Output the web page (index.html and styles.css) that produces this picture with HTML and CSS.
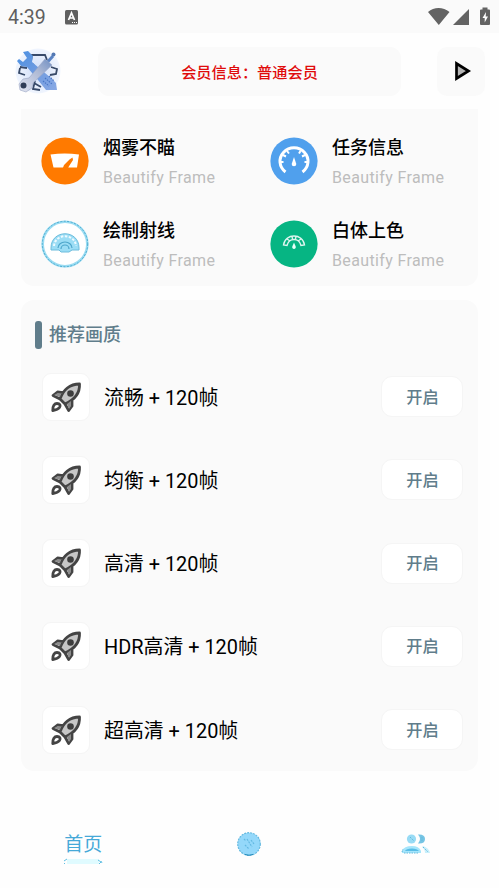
FILE: index.html
```html
<!DOCTYPE html>
<html lang="zh-CN">
<head>
<meta charset="utf-8">
<title>首页</title>
<link rel="stylesheet" href="styles.css">
</head>
<body>
<svg class="defs" aria-hidden="true">
  <symbol id="rocket" viewBox="0 0 32 32">
    <path d="M10 18C13 9 20 3 29.500 3C30 12 24 19 15 23Z" fill="#c6c6c6"/>
    <path d="M10 18L3 14.500L7.500 11L13.200 11.600M15 23L18.700 29.500L22 25V18.500M10 18C13 9 20 3 29.500 3C30 12 24 19 15 23ZM2.800 29.500C2.500 25 4.500 22.500 7 22.500C10 22.500 10.800 24.500 9.500 26.500C8 28.500 6 29 2.800 29.500Z" fill="none" stroke="#444" stroke-width="2.800" stroke-linejoin="round"/>
    <path d="M4 14L8 12L11 13L10 16ZM17 23L21 20V25L19 28Z" fill="#8c8c8c"/>
    <circle cx="20.500" cy="12.500" r="3.300" fill="#3e3e3e"/>
  </symbol>
</svg>
<div class="status">
  <span class="time">4:39</span>
  <svg class="badge" viewBox="0 0 14 15"><rect width="13" height="14.500" rx="1.500" fill="#606060"/><path d="M3.500 10L6.500 3L9.500 10M4.700 8H8.300" fill="none" stroke="#fff" stroke-width="1.700"/><path d="M7 12.500h1m1 0h1m1 0h1" stroke="#fff"/></svg>
  <svg class="signals" viewBox="0 0 64 20"><path d="M0 5C6-.4 15-.4 21.500 5L10.800 18Z M25 18L41 2V18Z M52 3.500Q52 2.500 53 2.500H54.500V.5H59.500V2.500H61Q62 2.500 62 3.500V17Q62 18 61 18H53Q52 18 52 17Z" fill="#636363"/><path d="M58 5L54.500 11H56.700V15.500L60 9.500H57.700Z" fill="#fff"/></svg>
</div>
<header class="header">
  <svg class="logo" viewBox="0 0 46 48">
    <defs><linearGradient id="blue" x1="0" y1="0" x2="1" y2="1"><stop stop-color="#4a90e2"/><stop offset=".5" stop-color="#6f9be0"/><stop offset="1" stop-color="#89a9e4"/></linearGradient><linearGradient id="steel" x1="1" y1="0" x2="0" y2="1"><stop stop-color="#6f8fc4"/><stop offset=".4" stop-color="#aeb9d4"/><stop offset="1" stop-color="#e3e6f2"/></linearGradient><radialGradient id="halo"><stop stop-color="#cfddf8"/><stop offset="1" stop-color="#f0f5fe"/></radialGradient></defs>
    <circle cx="23" cy="24" r="22.500" fill="url(#halo)"/>
    <path d="M16 14L17 8H30L32 13M14 15L19 18M5 21L4 26L10 28M5 20L12 21M36 20L42 22L41 27L35 28M20 34L18 42L25 43M19 36L26 40" fill="none" stroke="#384a69" stroke-width="1.800"/>
    <path d="M8 5L13 4L18 9L17 15L24 21L36 31L41 36L42 43L31 43L23 33L12 20L6 19L2 14L4 12L8 15L12 11Z" fill="url(#blue)"/>
    <path d="M38 9L28 20" stroke="#5a83c3" stroke-width="3"/><circle cx="38.500" cy="7.500" r="2" fill="#5479b3"/>
    <path d="M30 12L37 18L18 36L17 41L11 45L5 43L4 37L8 32L14 31Z" fill="url(#steel)" stroke="#98a4c2" stroke-width=".6"/>
    <circle cx="8.500" cy="38.500" r="3" fill="#303d57"/><path d="M30 31L37 37M28 34L34 39M34 29L39 34" stroke="#4876c5" stroke-width="1.200" stroke-dasharray="1.500 1"/>
  </svg>
  <div class="member">会员信息：普通会员</div>
  <div class="play"><svg viewBox="0 0 18 22"><path d="M2.500 3.500V18.500L14.500 11Z" fill="#b5b5b5" stroke="#000" stroke-width="2.700"/></svg></div>
</header>
<main>
  <section class="features">
    <div class="feature">
      <svg viewBox="0 0 48 48"><circle cx="24" cy="24" r="23.600" fill="#ff7a00"/><path d="M9.500 17.500Q23.500 15.500 38 17.500L36 30.500H12.500Z" fill="#fff"/><path d="M21.500 32L23 28L28.500 22.500L31.500 20.500L32 23L27.500 30L27 32Z" fill="#ff7a00"/></svg>
      <div><h3>烟雾不瞄</h3><p>Beautify Frame</p></div>
    </div>
    <div class="feature">
      <svg viewBox="0 0 48 48"><circle cx="24" cy="24" r="23.600" fill="#50a0ed"/><path d="M15.500 35A14 13.500 0 1 1 32.500 35" fill="none" stroke="#fff" stroke-width="3"/><path d="M13 18L16 19.500M17 14L19 16.500M30.500 14L29 16.500M35 18L32 19.500M11 25H13.500M34.500 25H37" stroke="#fff" stroke-width="2"/><path d="M24 20L26.300 27A2.300 2.300 0 1 1 21.700 27Z" fill="#fff"/></svg>
      <div><h3>任务信息</h3><p>Beautify Frame</p></div>
    </div>
    <div class="feature">
      <svg viewBox="0 0 48 48"><circle cx="24" cy="24" r="22.300" fill="#fff" stroke="#9bdcf2" stroke-width="2.600"/><circle cx="24" cy="24" r="22.700" fill="none" stroke="#4aabd0" stroke-width="1" stroke-dasharray="2 1.500"/><path d="M10 28C10 9 38 9 38 28V30H31L28 32H20L18 30H10Z" fill="#9bddf5" stroke="#6cbcdc"/><path d="M13 26C14 13 34 13 35 26" fill="none" stroke="#eefaff" stroke-width="2" stroke-dasharray="2.500 1.500"/><path d="M17 28A7 6 0 0 1 31 28M20 29A4 4 0 0 1 28 29" fill="none" stroke="#4da6cb" stroke-width="1.200"/></svg>
      <div><h3>绘制射线</h3><p>Beautify Frame</p></div>
    </div>
    <div class="feature">
      <svg viewBox="0 0 48 48"><circle cx="24" cy="24" r="23.600" fill="#06b583"/><path d="M13.500 25C15 13 33 13 34.500 25L31 25.500C29 17.500 19 17.500 17 25.500ZM17 19L20 21M22 16L22.500 19M26 16L25.500 19M31 19L28 21" fill="none" stroke="#dff5ef" stroke-width="1.400"/><path d="M24 22.500L25.700 26.500A1.800 1.800 0 1 1 22.300 26.500Z" fill="#e9fff9"/></svg>
      <div><h3>白体上色</h3><p>Beautify Frame</p></div>
    </div>
  </section>
  <section class="quality">
    <h2>推荐画质</h2>
    <div class="row"><span class="tile"><svg><use href="#rocket"/></svg></span><span class="name">流畅 + 120帧</span><button>开启</button></div>
    <div class="row"><span class="tile"><svg><use href="#rocket"/></svg></span><span class="name">均衡 + 120帧</span><button>开启</button></div>
    <div class="row"><span class="tile"><svg><use href="#rocket"/></svg></span><span class="name">高清 + 120帧</span><button>开启</button></div>
    <div class="row"><span class="tile"><svg><use href="#rocket"/></svg></span><span class="name">HDR高清 + 120帧</span><button>开启</button></div>
    <div class="row"><span class="tile"><svg><use href="#rocket"/></svg></span><span class="name">超高清 + 120帧</span><button>开启</button></div>
  </section>
</main>
<nav class="tabs">
  <div class="tab home"><span>首页</span><svg viewBox="0 0 40 7"><path d="M4 3.500H36" stroke="#e0fbff" stroke-width="5"/><path d="M1 3L4 1M1 5L2 6M35 2L38 4L36 6M38 3L39 5" stroke="#62bfe2" fill="none"/></svg></div>
  <div class="tab"><svg class="disc" viewBox="0 0 24 24"><circle cx="12" cy="12" r="11.300" fill="#94d8fa" stroke="#65b9df" stroke-width="1.200" stroke-dasharray="2 1"/><path d="M7 7L9 9M10 7L15 15M14 8L17 12M8 13L12 17" stroke="#63b9e2" stroke-width="1.200" stroke-dasharray="2 1"/><path d="M8 22.500Q12 24 16 22.500" fill="none" stroke="#2188b9"/></svg></div>
  <div class="tab"><svg class="people" viewBox="0 0 30 22"><circle cx="10.500" cy="6" r="4.600" fill="#98dbf5"/><path d="M17 1.500Q24 1 24 6Q24 11 17 10.500Q21 6 17 1.500Z" fill="#75c4e4"/><path d="M1 20V18Q3 13 11 13Q18 13 20 18V20Z" fill="#a5e5fb"/><path d="M4 18Q5 15.500 11 15.500Q16 15.500 18 18Z" fill="#58bde6"/><path d="M22 13Q28 15 29 20H24Q24 16 21 14Z" fill="#c8effb"/><path d="M1 19L2 16M3 20H18M22 14L27 19M9 4L13 8M21 4V8" stroke="#64b9dc" stroke-dasharray="1.500 1"/></svg></div>
</nav>
</body>
</html>
```
FILE: styles.css
```css
* { box-sizing: border-box; }
body { margin: 0; height: 888px; display: flex; flex-direction: column; overflow: hidden; background: #fefefe; color: #000; font-family: Roboto, "Noto Sans CJK SC", sans-serif; }
h2, h3, p { margin: 0; }
svg { display: block; flex: none; }
.defs { position: absolute; width: 0; height: 0; }
.status { height: 33px; flex: none; display: flex; align-items: center; padding: 0 7px 0 8px; background: #fafafa; }
.time { width: 57px; font-size: 19.500px; line-height: 24px; padding-top: 2px; color: #5f5f5f; }
.badge { width: 14px; height: 15px; margin-top: 1px; }
.signals { width: 64px; height: 20px; margin-left: auto; }
.header { height: 76px; flex: none; display: flex; align-items: center; padding: 0 14px 0 15px; }
.logo { width: 46px; height: 48px; }
.member { width: 303px; height: 49px; margin-left: 37px; padding-bottom: 1px; display: flex; align-items: center; justify-content: center; border-radius: 11px; background: #fafafa; color: #e00b0b; font-size: 15.200px; font-weight: 500; }
.play { width: 48px; height: 49px; margin-left: auto; display: flex; align-items: center; justify-content: center; border-radius: 10px; background: #fafafa; }
.play svg { width: 18px; height: 22px; margin-left: 3px; }
main { padding: 0 21px; }
.features { height: 177px; display: grid; grid-template-columns: 229px 1fr; grid-template-rows: 83px 83px; padding: 10px 0 0 20px; border-radius: 0 0 13px 13px; background: #fafafa; }
.feature { display: flex; align-items: center; gap: 14px; }
.feature > svg { width: 48px; height: 48px; }
.feature > div { padding-top: 3px; }
h3 { font-size: 18px; line-height: 24px; font-weight: 500; }
.feature p { margin-top: 7px; font-size: 16px; line-height: 22px; letter-spacing: .37px; color: #bdbdbd; }
.quality { height: 471px; margin-top: 14px; border-radius: 13px; background: #fafafa; }
.quality h2 { height: 55px; display: flex; align-items: center; gap: 7px; padding: 14px 0 0 14px; color: #607d8b; font-size: 18px; line-height: 24px; font-weight: 500; }
.quality h2::before { content: ""; width: 7px; height: 28px; border-radius: 3px; background: #607d8b; }
.row { height: 83.250px; display: flex; align-items: center; padding: 0 15px 0 21px; }
.tile { width: 48px; height: 48px; display: flex; align-items: center; justify-content: center; border: 1px solid #f5f5f5; border-radius: 9px; background: #fff; }
.tile svg { width: 32px; height: 32px; }
.name { margin-left: 14px; padding-top: 4px; font-size: 19.900px; line-height: 28px; }
button { width: 82px; height: 41px; margin-left: auto; padding: 2px 0 0 1px; border: 1px solid #f5f5f5; border-radius: 11px; background: #fff; color: #607d8b; font: 500 16.200px/24px Roboto, "Noto Sans CJK SC", sans-serif; }
.tabs { height: 88px; flex: none; margin-top: 29px; display: grid; grid-template-columns: repeat(3, 1fr); }
.tab { display: flex; justify-content: center; padding-top: 32px; }
.home { flex-direction: column; justify-content: flex-start; align-items: center; font-size: 19px; line-height: 26px; color: #46a9d8; }
.home svg { width: 40px; height: 7px; }
.disc { width: 24px; height: 24px; }
.people { width: 30px; height: 22px; margin-top: 1px; }
```
